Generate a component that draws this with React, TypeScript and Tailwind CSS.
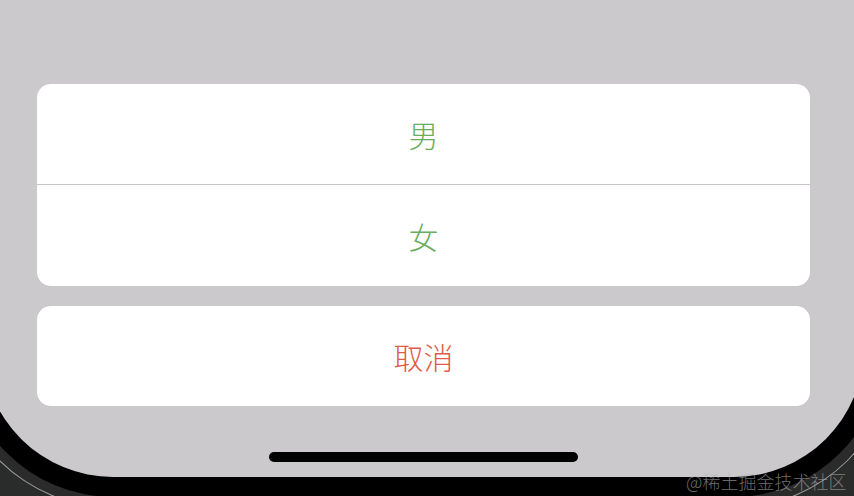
const font = { fontFamily: '"Noto Sans CJK SC", "Noto Sans", sans-serif' };

function SheetButton({ label, tone }: { label: string; tone: 'green' | 'red' }) {
  return (
    <button
      className={
        'w-full h-[100px] flex items-center justify-center text-[30px] font-light leading-none ' +
        (tone === 'green' ? 'text-[#69ad5e]' : 'text-[#de5b49]')
      }
    >
      {label}
    </button>
  );
}

export default function App() {
  return (
    <div
      className="relative w-[854px] h-[496px] overflow-hidden bg-[#2a2b2b]"
      style={font}
    >
      {/* phone edge highlight */}
      <div className="ml-[-48px] w-[943px] h-[508px] border border-t-0 border-[#9c9c9c] rounded-b-[161px] bg-[#2b2b2b] px-[10px] pb-[10px]">
        {/* bezel */}
        <div className="h-[497px] bg-black rounded-b-[150px] px-[20px] pb-[20px]">
          {/* screen */}
          <div className="h-[477px] bg-[#cbc9cc] rounded-b-[130px] px-[54px] pt-[84px] flex flex-col">
            <div className="bg-white rounded-[14px] overflow-hidden flex flex-col">
              <SheetButton label="男" tone="green" />
              <div className="h-px bg-[#c6c6c8]" />
              <div className="h-[101px] flex items-center justify-center text-[30px] font-light leading-none text-[#69ad5e]">女</div>
            </div>
            <div className="mt-[20px] bg-white rounded-[14px] overflow-hidden">
              <SheetButton label="取消" tone="red" />
            </div>
            <div className="mt-[46px] flex justify-center">
              <div className="w-[309px] h-[10px] rounded-full bg-black" />
            </div>
          </div>
        </div>
      </div>

      <div className="absolute left-[686px] top-[470px] text-[18px] font-light leading-[22px] text-[#b4b4b4]/60 whitespace-nowrap">
        @稀土掘金技术社区
      </div>
    </div>
  );
}
